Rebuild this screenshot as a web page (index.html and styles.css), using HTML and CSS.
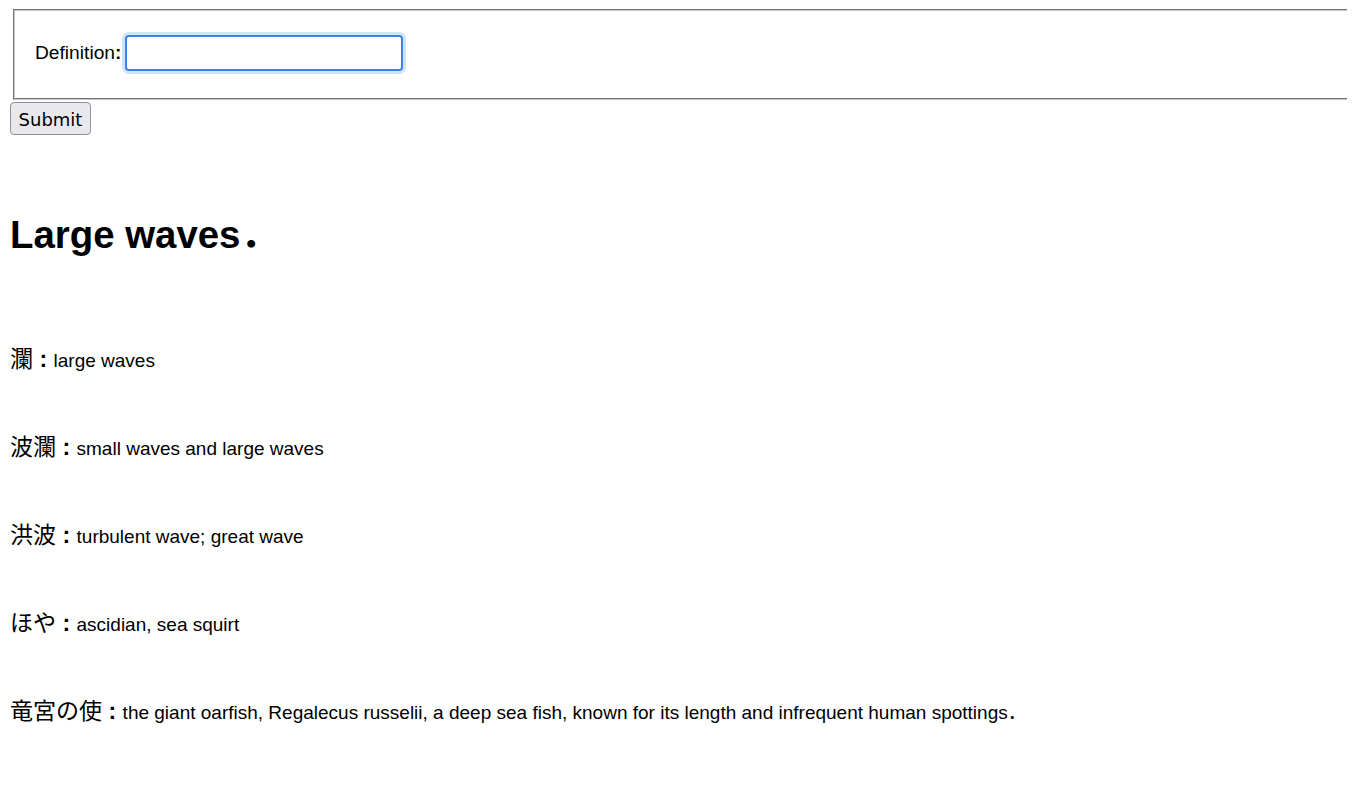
FILE: index.html
```html
<!DOCTYPE html>
<html lang="ja">
<head>
<meta charset="utf-8">
<title>Large waves</title>
<link rel="stylesheet" href="styles.css">
</head>
<body>
<form class="search">
  <fieldset class="box">
    <label class="field-label" for="definition">Definition<b class="colon">:</b></label><input class="field" id="definition" type="text">
  </fieldset>
  <button class="submit" type="button">Submit</button>
</form>
<h1 class="title">Large waves．</h1>
<div class="entries">
  <p class="entry"><span class="word">瀾 <b class="colon">:</b> </span><span class="def">large waves</span></p>
  <p class="entry"><span class="word">波瀾 <b class="colon">:</b> </span><span class="def">small waves and large waves</span></p>
  <p class="entry"><span class="word">洪波 <b class="colon">:</b> </span><span class="def">turbulent wave; great wave</span></p>
  <p class="entry"><span class="word">ほや <b class="colon">:</b> </span><span class="def">ascidian, sea squirt</span></p>
  <p class="entry"><span class="word">竜宮の使 <b class="colon">:</b> </span><span class="def">the giant oarfish, Regalecus russelii, a deep sea fish, known for its length and infrequent human spottings．</span></p>
</div>
</body>
</html>
```

FILE: styles.css
```css
html {
  overflow-x: hidden;
}
body {
  margin: 9px 10px;
  font-family: "Liberation Sans", Arial, "Noto Sans CJK JP", sans-serif;
  font-size: 19.2px;
  color: #000;
  background: #fff;
}
.colon {
  font-weight: bold;
}
.search {
  margin: 0;
}
.box {
  width: 1400px;
  height: 91px;
  margin: 0 2px 0 3px;
  padding: 0 20px;
  border: 2px groove #c8c8c8;
  display: flex;
  align-items: center;
  box-sizing: border-box;
}
.field-label {
  line-height: 22px;
  margin-top: -4px;
}
.field {
  width: 278px;
  height: 36px;
  box-sizing: border-box;
  margin: -3px 0 0 4px;
  border: 2px solid #3a82e4;
  border-radius: 4px;
  box-shadow: 0 0 0 3px #cfe4fc;
  outline: none;
  background: #fff;
  font: inherit;
  padding: 0 4px;
}
.submit {
  display: block;
  margin-top: 2px;
  width: 81px;
  height: 33px;
  padding: 0;
  font-family: "DejaVu Sans", sans-serif;
  font-size: 18px;
  line-height: 33px;
  color: #000;
  background: #e9e9ed;
  border: 1px solid #8f8f9d;
  border-radius: 4px;
}
.title {
  font-size: 38.4px;
  font-weight: bold;
  line-height: 44px;
  margin: 78px 0 0 0;
}
.entries {
  margin-top: 88px;
}
.entry {
  margin: 0 0 60px 0;
  line-height: 28px;
  height: 28px;
  white-space: nowrap;
}
.word {
  font-size: 23.04px;
}
.def {
  font-size: 19px;
}
```
